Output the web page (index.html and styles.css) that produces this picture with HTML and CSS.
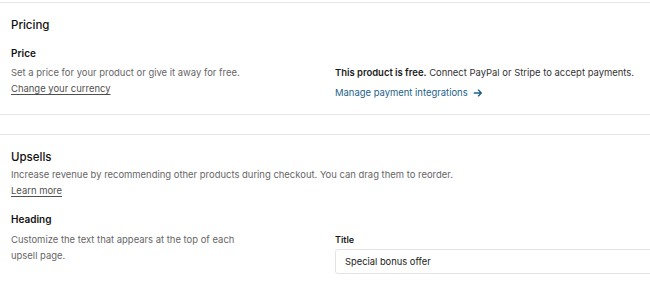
FILE: index.html
```html
<!DOCTYPE html>
<html>
<head>
<meta charset="utf-8">
<link rel="stylesheet" href="styles.css">
</head>
<body>
<div class="page">
  <section class="card">
    <h2 class="card-title">Pricing</h2>
    <div class="field-row">
      <div class="field-info">
        <h3 class="field-title">Price</h3>
        <p class="muted">Set a price for your product or give it away for free.</p>
        <a class="muted-link" href="#">Change your currency</a>
      </div>
      <div class="field-control pricing-control">
        <p class="free-note"><strong>This product is free.</strong> Connect PayPal or Stripe to accept payments.</p>
        <a class="action-link" href="#">Manage payment integrations
          <svg class="arrow" viewBox="0 0 12 12" width="10" height="10"><path d="M1.5 6h8.5M6.5 2.5L10 6l-3.5 3.5" fill="none" stroke="currentColor" stroke-width="1.6" stroke-linecap="round" stroke-linejoin="round"/></svg>
        </a>
      </div>
    </div>
  </section>
  <section class="card">
    <h2 class="card-title">Upsells</h2>
    <p class="muted tight">Increase revenue by recommending other products during checkout. You can drag them to reorder.</p>
    <a class="muted-link" href="#">Learn more</a>
    <div class="field-row heading-row">
      <div class="field-info">
        <h3 class="field-title">Heading</h3>
        <p class="muted narrow">Customize the text that appears at the top of each upsell page.</p>
      </div>
      <div class="field-control">
        <label class="input-label">Title</label>
        <div class="text-input">Special bonus offer</div>
      </div>
    </div>
  </section>
</div>
</body>
</html>
```

FILE: styles.css
```css
html, body {
  margin: 0;
  padding: 0;
  background: #ffffff;
  overflow: hidden;
}
body {
  font-family: Inter, "Noto Sans", sans-serif;
  color: #1a1a1a;
  width: 650px;
  height: 284px;
}
.page {
  padding-top: 2px;
  display: flex;
  flex-direction: column;
  gap: 19px;
}
.card {
  border-top: 1px solid #e6e6e6;
  border-bottom: 1px solid #e6e6e6;
  padding: 14px 11px 13px 11px;
}
.card-title {
  margin: 0;
  font-size: 11.5px;
  font-weight: 500;
  line-height: 16px;
  color: #111111;
}
.field-row {
  display: grid;
  grid-template-columns: 304px 330px;
  column-gap: 20px;
  margin-top: 12px;
}
.field-title {
  margin: 0;
  font-size: 10px;
  font-weight: 600;
  line-height: 16px;
  color: #111111;
}
.muted {
  margin: 4px 0 0 0;
  font-size: 9.45px;
  line-height: 16px;
  color: #666666;
}
.muted.tight {
  margin-top: 2px;
}
.muted-link {
  display: block;
  width: fit-content;
  font-size: 9.45px;
  line-height: 16px;
  color: #505050;
  text-decoration: underline;
  text-underline-offset: 2px;
}
.pricing-control {
  padding-top: 20px;
}
.free-note {
  margin: 0;
  font-size: 9.45px;
  line-height: 16px;
  color: #333333;
}
.free-note strong {
  font-weight: 600;
  color: #1a1a1a;
}
.action-link {
  display: flex;
  width: fit-content;
  align-items: center;
  gap: 5px;
  margin-top: 4px;
  font-size: 9.45px;
  line-height: 16px;
  color: #1d5f8a;
  text-decoration: none;
}
.heading-row {
  margin-top: 12px;
}
.narrow {
  margin-top: 5px;
  max-width: 240px;
}
.input-label {
  display: block;
  margin-top: 22px;
  font-size: 9px;
  font-weight: 600;
  line-height: 14px;
  color: #1a1a1a;
}
.text-input {
  margin-top: 2px;
  height: 25px;
  box-sizing: border-box;
  border: 1px solid #e3e3e3;
  border-radius: 3px;
  padding: 0 9px;
  font-size: 9.35px;
  line-height: 23px;
  color: #1a1a1a;
}
```
